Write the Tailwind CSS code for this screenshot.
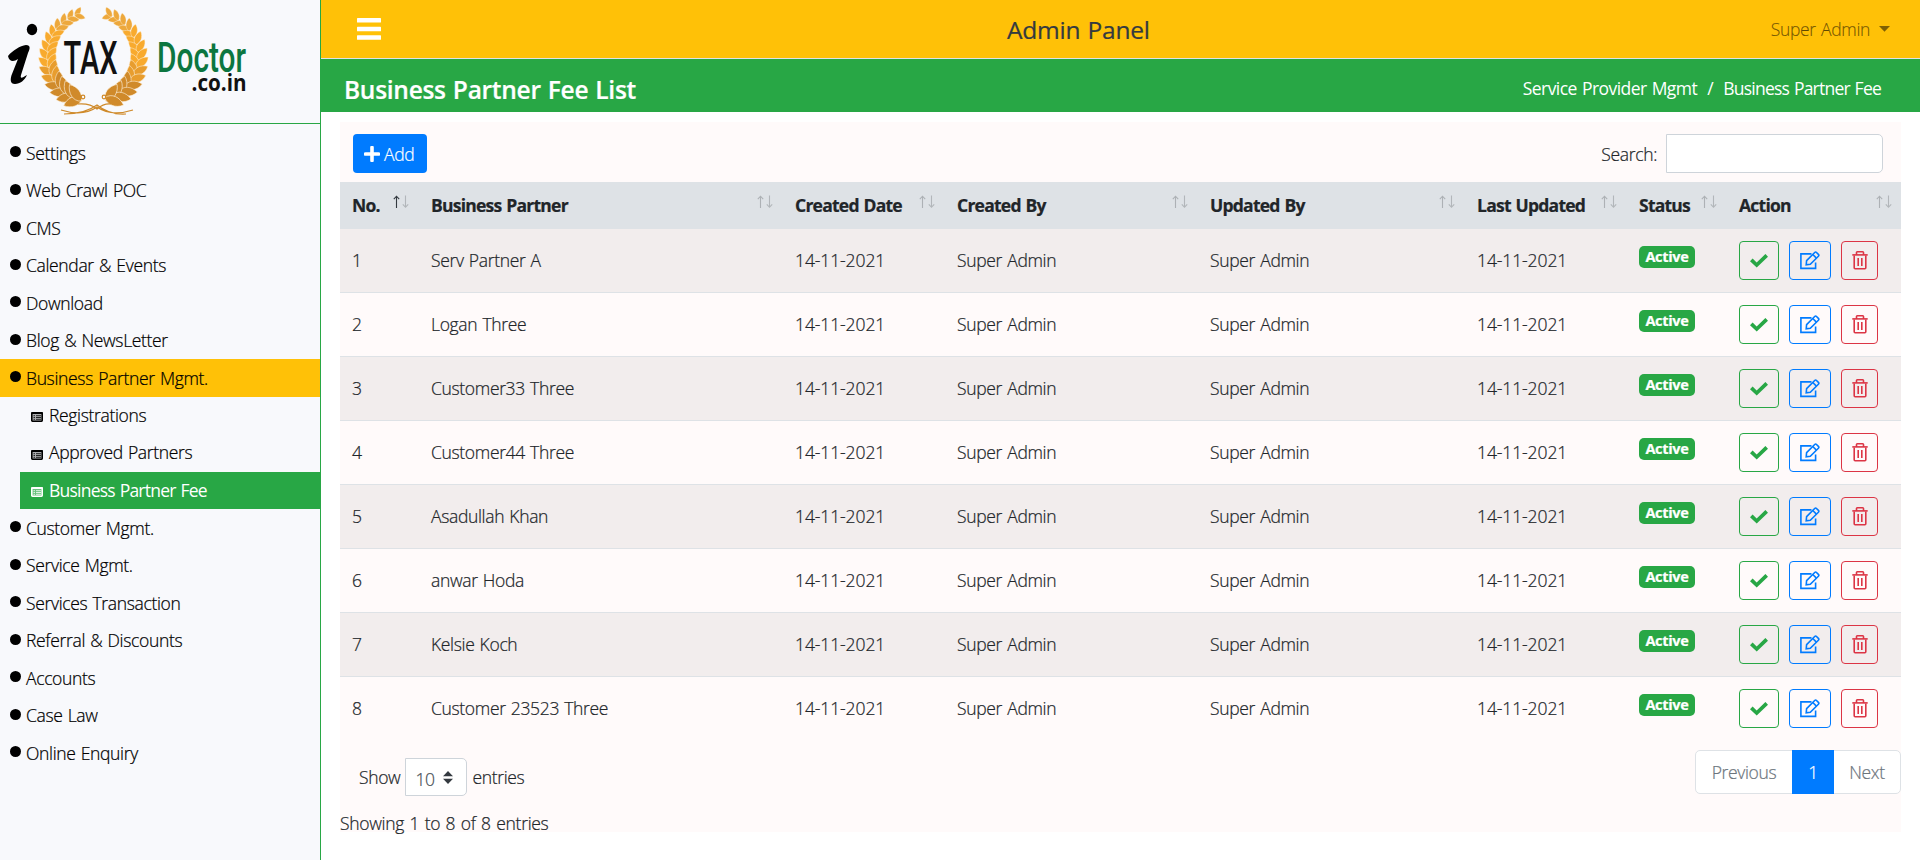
<!DOCTYPE html>
<html lang="en">
<head>
<meta charset="utf-8">
<title>Business Partner Fee List</title>
<script src="https://cdn.jsdelivr.net/npm/@tailwindcss/browser@4"></script>
</head>
<body class="h-[860px] overflow-hidden bg-white font-['Open_Sans','Noto_Sans',sans-serif] text-[17.5px] leading-[27px] font-light tracking-[-0.34px] [word-spacing:1px] text-[#212529] [-webkit-text-stroke:0.22px]">
<svg class="hidden">
  <symbol id="check" viewBox="0 0 18 14"><path d="M1.300 5.800 6.700 11l10-9.700" fill="none" stroke="currentColor" stroke-width="3.700"/></symbol>
  <symbol id="edit" viewBox="0 0 20 19"><g fill="none" stroke="currentColor" stroke-width="1.600"><path d="M11.500 2.900H.9v14.500h14.700v-6"/><path d="m6.600 9.600 8.100-8.100q.9-.9 1.800 0l1.900 1.900q.9.9 0 1.800l-8.100 8.100-4.100.5Z"/><path d="m12.800 3.500 3.600 3.600"/></g></symbol>
  <symbol id="trash" viewBox="0 0 16 19"><g fill="none" stroke="currentColor" stroke-width="1.600"><path d="M.3 3.900h15.400"/><path d="M4.500 4V1.600q0-.8.8-.8h5.400q.8 0 .8.800V4"/><path d="M2.200 4.500v12.300q0 .9.900.9h9.800q.9 0 .9-.9V4.500"/><path d="M6.200 7v8M9.800 7v8"/></g></symbol>
  <symbol id="list" viewBox="0 0 12 10"><rect x=".8" y=".8" width="10.400" height="8.400" rx=".6" fill="currentColor" fill-opacity=".3" stroke="currentColor" stroke-width="1.600"/><path d="M0 1.200h12" stroke="currentColor" stroke-width="1.600"/><path d="M2.500 3.700H4M5 3.700h5M2.500 5.500H4M5 5.500h5M2.500 7.300H4M5 7.300h5" stroke="currentColor" stroke-width=".8"/></symbol>
  <symbol id="sort" viewBox="0 0 16 14"><path d="M3.500 13V1.500M.8 4.200 3.500 1.200 6.200 4.200" fill="none" stroke="var(--up,#adb1b5)" stroke-width="1.100"/><path d="M12.500 .5V12M9.800 9.300l2.700 3 2.700-3" fill="none" stroke="#b2b6ba" stroke-width="1.100"/></symbol>
</svg>
<div class="flex h-full">
  <aside class="w-[321px] shrink-0 border-r border-[#28a745] bg-[#f8f9fc] text-black">
    <div class="h-[124px] border-b border-[#28a745]">
      <svg id="logo" class="block h-[123px] w-[320px]" viewBox="0 0 320 123">
        <ellipse cx="32" cy="29.500" rx="5.200" ry="5.800"/>
        <path d="M8 56c5-6 12-10 18-11 5 0 4 4 2 8l-7 22c-1 4 1 3 6 0-2 5-7 9-12 9-5 0-5-5-3-10l6-15c-4 3-9 3-10-3Z"/>
        <g id="wreath"></g>
        <g fill="none" stroke="#cf8a2a" stroke-width="1.200"><path d="M61 110q22 7 36-3 14 10 36 3M64 114q21 0 33-9 12 10 29 9M78 104q12-1 19 5 7-6 14-5"/><circle cx="83" cy="97" r="1.800"/><circle cx="104" cy="97" r="1.800"/></g>
        <text x="63.500" y="74" font-family="Roboto" font-weight="500" font-size="46" fill="#111" textLength="54" lengthAdjust="spacingAndGlyphs" letter-spacing="0">TAX</text>
        <text x="157" y="72" font-family="Roboto" font-weight="500" font-size="42" fill="#0c7640" textLength="89" lengthAdjust="spacingAndGlyphs" letter-spacing="0">Doctor</text>
        <text x="191.500" y="91" font-family="Open Sans" font-weight="700" font-size="23" fill="#111" textLength="55" lengthAdjust="spacingAndGlyphs" letter-spacing="0">.co.in</text>
      </svg>
    </div>
    <nav id="menu" class="pt-[10px]"></nav>
  </aside>
  <div class="flex min-w-0 flex-1 flex-col">
    <header class="flex h-[59px] shrink-0 items-center justify-between border-b border-[#dee2e6] bg-[#ffc107] pr-[30px] pl-[36px]">
      <svg class="h-[22px] w-[24px]" viewBox="0 0 24 22" fill="#fff"><rect width="24" height="4.500" rx=".6"/><rect y="8.800" width="24" height="4.500" rx=".6"/><rect y="17.300" width="24" height="4.500" rx=".6"/></svg>
      <h1 class="pl-[5px] text-[24.500px] font-normal tracking-[-0.2px] text-[#343a40]">Admin Panel</h1>
      <div class="flex items-center gap-[9px] text-black/50">Super Admin<svg class="h-[6px] w-[11px]" viewBox="0 0 11 6" fill="currentColor"><path d="M0 0h11L5.500 5.700Z"/></svg></div>
    </header>
    <div class="flex h-[53px] shrink-0 items-center justify-between bg-[#28a745] pr-[39px] pl-[23px] text-white">
      <h2 class="pt-[7px] text-[24.500px] font-semibold tracking-[-0.280px]">Business Partner Fee List</h2>
      <div class="flex gap-[10px] pt-[6px] font-normal [-webkit-text-stroke:0px]"><span class="tracking-[-0.540px]">Service Provider Mgmt</span><span>/</span><span class="tracking-[-0.770px]">Business Partner Fee</span></div>
    </div>
    <main class="mt-[10px] ml-[19px] h-[710px] w-[1561px] bg-[#fffafa]">
      <div class="flex h-[60px] items-start justify-between pt-[12px] pr-[18px] pl-[13px]">
        <button class="flex h-[39px] w-[74px] items-center gap-[4px] rounded-[4px] bg-[#007bff] pt-px pl-[11px] text-white"><svg class="size-[16px]" viewBox="0 0 16 16"><path d="M8 1.500v13M1.500 8h13" stroke="#fff" stroke-width="3.600" stroke-linecap="round"/></svg>Add</button>
        <label class="flex items-center gap-[9px]"><span class="pt-[2px]">Search:</span><input class="h-[39px] w-[217px] rounded-r-[5px] border border-[#ced4da] bg-white"></label>
      </div>
      <table class="w-full table-fixed border-separate border-spacing-0">
        <colgroup><col class="w-[78px]"><col class="w-[364px]"><col class="w-[162px]"><col class="w-[253px]"><col class="w-[267px]"><col class="w-[162px]"><col class="w-[100px]"><col class="w-[175px]"></colgroup>
        <thead class="bg-[#dee2e6]"><tr id="head"></tr></thead>
        <tbody id="rows"></tbody>
      </table>
      <div class="flex justify-between">
        <div class="flex items-center gap-[5px] pt-[17px] pl-[19px]">Show<span class="flex h-[38px] w-[62px] items-center gap-[8px] rounded-r-[5px] border border-[#ced4da] bg-white pt-[4px] pl-[9px] text-[#495057]">10<svg class="mb-[4px] h-[13px] w-[10px]" viewBox="0 0 10 13" fill="#343a40"><path d="M0 5.200 5 0l5 5.200ZM0 7.800h10L5 13Z"/></svg></span>entries</div>
        <div class="mt-[9px] flex h-[44px] w-[206px] rounded-[5px] border border-[#dee2e6] bg-white leading-[43px] text-[#6c757d]"><span class="w-[96px] text-center">Previous</span><span class="-my-px w-[42px] bg-[#007bff] text-center leading-[45px] text-white">1</span><span class="w-[66px] text-center">Next</span></div>
      </div>
      <p class="pt-[14px] tracking-[-0.300px] [word-spacing:1.200px]">Showing 1 to 8 of 8 entries</p>
    </main>
  </div>
</div>
<script>
const dot = '<span class="mr-[5px] mb-[3px] size-[11px] rounded-full bg-black"></span>';
const item = t => `<div class="flex h-[37.5px] items-center pt-px pl-[10px] ${t === 'Business Partner Mgmt.' ? 'bg-[#ffc107]' : ''}">${dot}${t}</div>`;
const sub = t => `<div class="ml-[20px] flex h-[37.5px] items-center pl-[11px] ${t === 'Business Partner Fee' ? 'bg-[#28a745] font-normal tracking-[-0.770px] text-white [-webkit-text-stroke:0px]' : ''}"><svg class="mt-[4px] mr-[6px] h-[10px] w-[12px]"><use href="#list"/></svg>${t}</div>`;
document.getElementById('menu').innerHTML =
  ['Settings','Web Crawl POC','CMS','Calendar &amp; Events','Download','Blog &amp; NewsLetter','Business Partner Mgmt.'].map(item).join('') +
  ['Registrations','Approved Partners','Business Partner Fee'].map(sub).join('') +
  ['Customer Mgmt.','Service Mgmt.','Services Transaction','Referral &amp; Discounts','Accounts','Case Law','Online Enquiry'].map(item).join('');

document.getElementById('head').innerHTML = ['No.','Business Partner','Created Date','Created By','Updated By','Last Updated','Status','Action'].map((t, i) =>
  `<th class="h-[47px] p-0 pr-[9px] pl-[13px] text-left font-bold tracking-[-0.76px] first:pl-[12px]"><div class="flex items-center justify-between whitespace-nowrap"><span>${t}</span><svg class="mb-[7px] h-[14px] w-[16px] shrink-0 ${i === 0 ? '[--up:#343a40]' : ''}"><use href="#sort"/></svg></div></th>`).join('');

const btn = 'flex h-[39px] items-center justify-center rounded-[4px] border';
document.getElementById('rows').innerHTML = ['Serv Partner A','Logan Three','Customer33 Three','Customer44 Three','Asadullah Khan','anwar Hoda','Kelsie Koch','Customer 23523 Three'].map((n, i) =>
  `<tr class="h-[64px] odd:bg-[#f2eded] [&>td]:border-b [&>td]:border-[#dee2e6] last:[&>td]:border-transparent">` +
  [i + 1, n, '14-11-2021', 'Super Admin', 'Super Admin', '14-11-2021'].map((c, j) => `<td class="p-0 pl-[13px] first:pl-[12px] ${j === 2 || j === 5 ? 'tracking-[-0.1px]' : ''}">${c}</td>`).join('') +
  `<td class="p-0 pb-[7px] pl-[13px]"><span class="flex h-[22px] w-[56px] items-center justify-center rounded-[5px] bg-[#28a745] pb-px text-[14.500px] font-bold tracking-[-0.3px] text-white">Active</span></td>
  <td class="p-0 pl-[13px]"><div class="flex gap-[10px]">
    <span class="${btn} w-[40px] border-[#28a745] text-[#28a745]"><svg class="h-[14px] w-[18px]"><use href="#check"/></svg></span>
    <span class="${btn} w-[42px] border-[#007bff] text-[#007bff]"><svg class="h-[19px] w-[20px]"><use href="#edit"/></svg></span>
    <span class="${btn} w-[37px] border-[#dc3545] text-[#dc3545]"><svg class="h-[19px] w-[16px]"><use href="#trash"/></svg></span>
  </div></td></tr>`).join('');

// Laurel wreath: an outer and an inner leaf at each node of a half ellipse
let w = '';
for (const s of [-1, 1]) for (let k = 0; k < 15; k++) {
  const a = (69 - k * 10.2) * Math.PI / 180, x = 93.5 + s * (2 + 43 * Math.cos(a)), y = 56.5 - 44 * Math.sin(a);
  const dir = Math.atan2(-44 * Math.cos(a), -s * 43 * Math.sin(a)) * 180 / Math.PI, z = .66 + k * .038;
  const fill = y > 85 ? '#d08a2a' : y > 68 ? '#e89d2e' : y > 30 ? '#f8aa2e' : '#eda83c';
  for (const r of [-40, 38]) {
    const t = (dir + r) * Math.PI / 180;
    w += `<path fill="${fill}" stroke="#fdf3e0" stroke-width=".5" d="M-8 0C-4-6 4-5 9 0C4 5-4 5-8 0Z" transform="translate(${x + 5.5 * z * Math.cos(t)} ${y + 5.5 * z * Math.sin(t)}) rotate(${dir + r}) scale(${z})"/>`;
  }
}
document.getElementById('wreath').innerHTML = w;
</script>
</body>
</html>
